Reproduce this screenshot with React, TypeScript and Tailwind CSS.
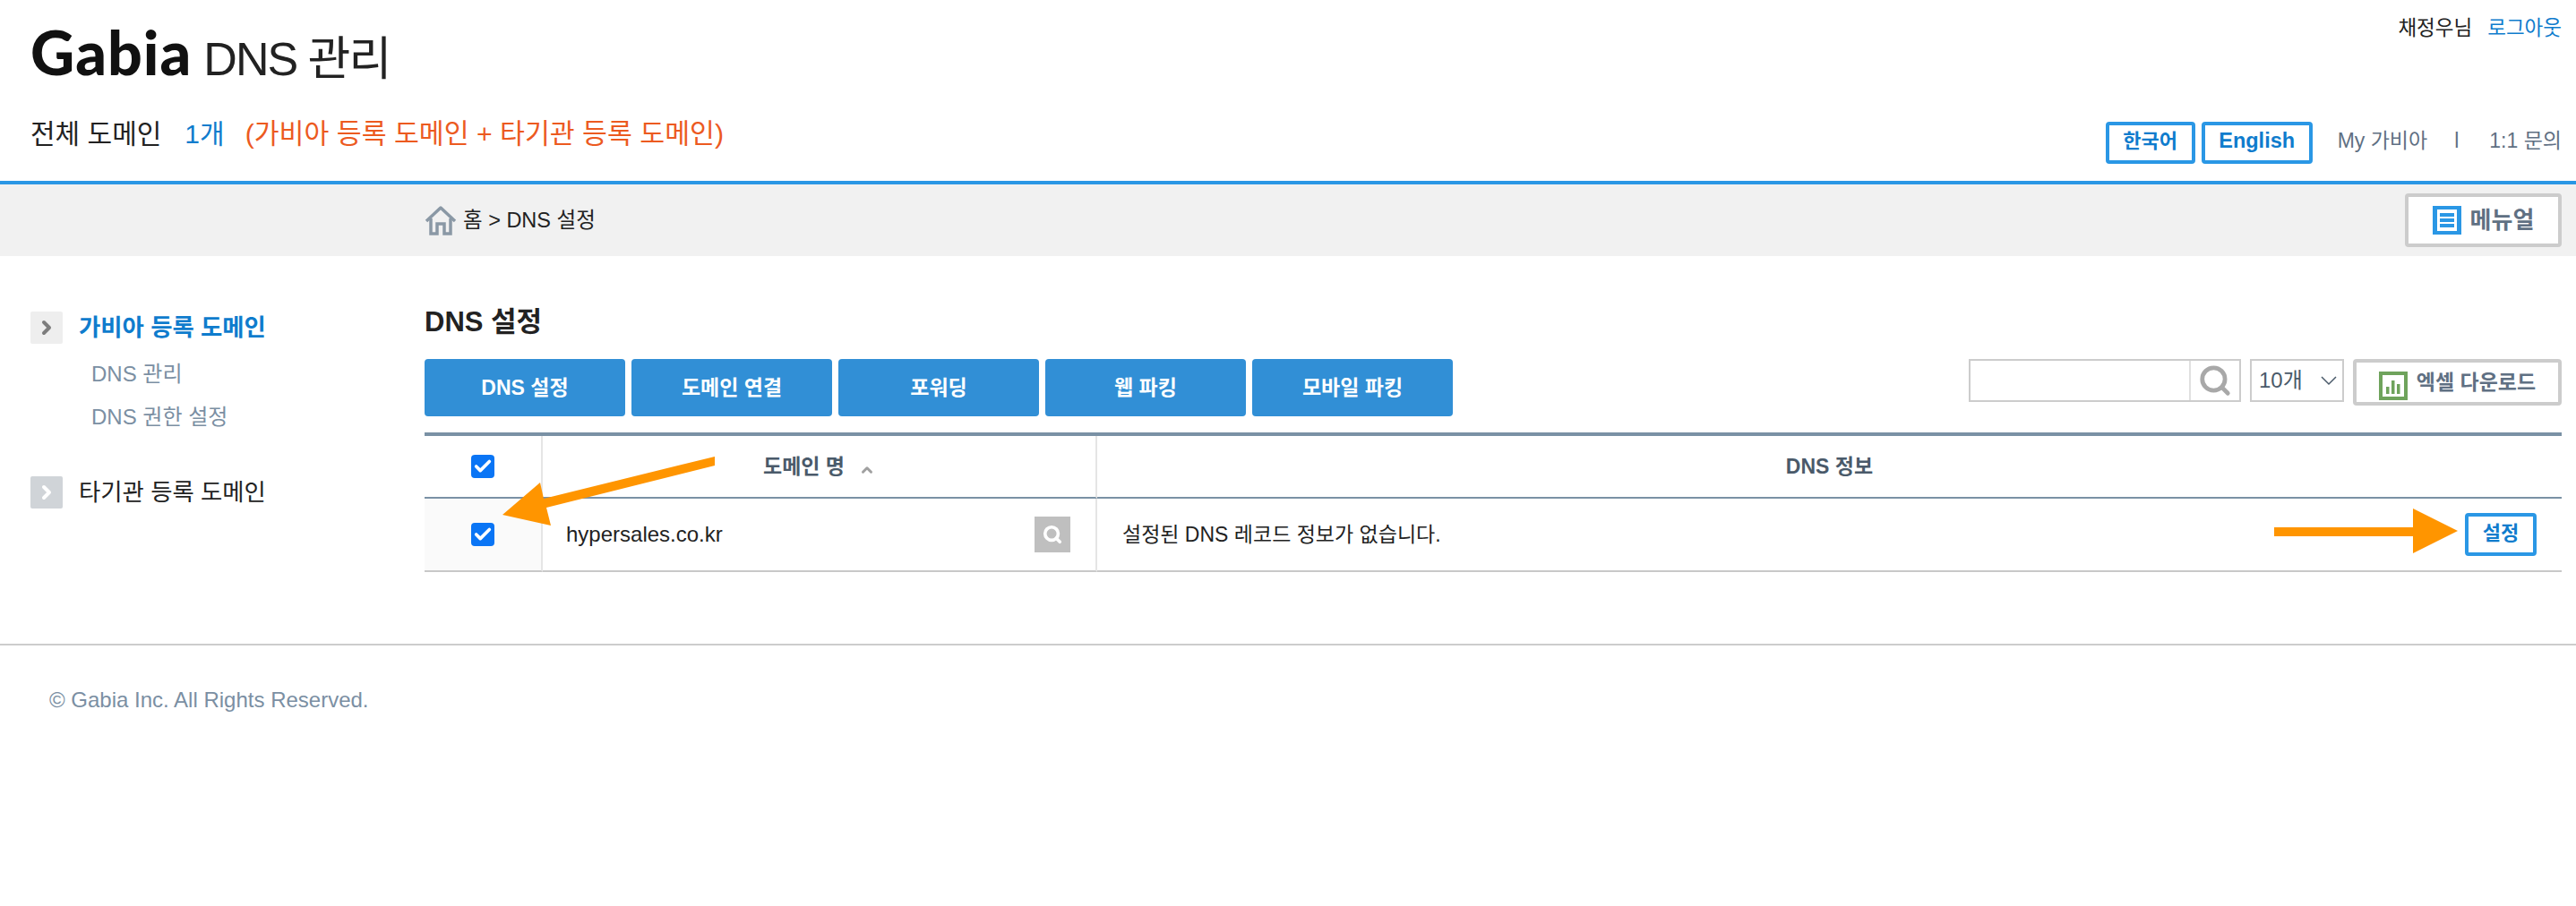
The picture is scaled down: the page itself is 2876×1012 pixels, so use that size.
import { Check, ChevronRight, ChevronUp, Search } from 'lucide-react'

const SANS = 'font-["Liberation_Sans","Noto_Sans_CJK_KR",sans-serif]'

const tabs = ['DNS 설정', '도메인 연결', '포워딩', '웹 파킹', '모바일 파킹']

const HomeIcon = () => (
  <svg width="36" height="34" viewBox="0 0 36 34" fill="none" stroke="#8a98a5" strokeWidth="3.5">
    <path d="M2 18 18 3l16 15" strokeLinejoin="round" />
    <path d="M7 15v17h7V21h8v11h7V15" />
  </svg>
)

const MenuIcon = () => (
  <svg width="32" height="32" viewBox="0 0 32 32">
    <rect width="32" height="32" fill="#2a97e5" />
    <rect x="5" y="4" width="22" height="24" fill="#fff" />
    <rect x="8" y="8" width="16" height="4" fill="#2a97e5" />
    <rect x="8" y="14" width="16" height="4" fill="#2a97e5" />
    <rect x="8" y="20" width="16" height="4" fill="#2a97e5" />
  </svg>
)

const ExcelIcon = () => (
  <svg width="32" height="32" viewBox="0 0 32 32">
    <rect width="32" height="32" fill="#6fa35c" />
    <rect x="4" y="4" width="24" height="24" fill="#fff" />
    <rect x="8" y="17" width="3.5" height="8" fill="#6fa35c" />
    <rect x="14" y="10" width="3.5" height="15" fill="#6fa35c" />
    <rect x="20" y="14" width="3.5" height="11" fill="#6fa35c" />
  </svg>
)

const CheckBox = () => (
  <span className="mx-auto flex h-[26px] w-[26px] items-center justify-center rounded-[4px] bg-[#0a75f5]">
    <Check size={22} color="#fff" strokeWidth={4} />
  </span>
)

const SideHead = ({ label, active }: { label: string; active?: boolean }) => (
  <div className="flex h-9 items-center gap-[18px]">
    <span
      className={`flex h-9 w-9 items-center justify-center rounded-[2px] ${active ? 'bg-[#eeeeee]' : 'bg-[#d0d4d8]'}`}
    >
      <ChevronRight size={24} strokeWidth={4} color={active ? '#7d7d7d' : '#ffffff'} />
    </span>
    <span className={`text-[26.4px] leading-9 ${active ? 'font-bold text-[#0f7ccd]' : 'text-[#222222]'}`}>{label}</span>
  </div>
)

export default function App() {
  return (
    <div className={`relative h-[1012px] w-[2876px] overflow-hidden bg-white ${SANS}`}>
      <header className="flex h-[206px] justify-between border-b-4 border-[#2a97e5] pl-[34px] pr-4">
        <div>
          <h1 className="mt-[24px] flex h-[68px] items-baseline leading-[68px]">
            <span className='font-["Lato"] text-[68px] font-black tracking-[1px] text-[#111111]'>Gabia</span>
            <span className="ml-[13px] text-[52px] tracking-[-2px] text-[#222222]">DNS 관리</span>
          </h1>
          <p className="mt-[38px] flex text-[30px] leading-10">
            <span className="text-[#222222]">전체 도메인</span>
            <span className="ml-[26px] text-[#0f7ccd]">1개</span>
            <span className="ml-[23px] text-[30.3px] text-[#ec5a1f]">(가비아 등록 도메인 + 타기관 등록 도메인)</span>
          </p>
        </div>
        <div className="flex flex-col items-end">
          <div className="mt-[16px] flex text-[22.5px] leading-8">
            <span className="text-[#222222]">채정우님</span>
            <a className="ml-[17px] text-[#0f7ccd]">로그아웃</a>
          </div>
          <div className="mt-[88px] flex items-center text-[23px] text-[#5f7083]">
            <button className="h-[47px] w-[100px] rounded-[4px] border-4 border-[#2a97e5] pb-1 text-[22px] font-bold text-[#0f7ccd]">
              한국어
            </button>
            <button className="ml-[7px] h-[47px] w-[124px] rounded-[4px] border-4 border-[#2a97e5] pb-1 text-[23.5px] font-bold text-[#0f7ccd]">
              English
            </button>
            <span className="ml-7 pb-1">My 가비아</span>
            <span className="ml-[30px] pb-1">l</span>
            <span className="ml-[34px] pb-1">1:1 문의</span>
          </div>
        </div>
      </header>

      <div className="flex h-20 items-center justify-between bg-[#f1f1f1] pl-[474px] pr-4">
        <div className="flex items-center gap-[7px] text-[23.5px] text-[#222222]">
          <HomeIcon />
          <span className="pt-[2px]">홈 &gt; DNS 설정</span>
        </div>
        <button className="flex h-[60px] w-[175px] items-center justify-center gap-[10px] rounded-[4px] border-4 border-[#cccccc] bg-white text-[26px] font-bold text-[#5f7083]">
          <MenuIcon />
          메뉴얼
        </button>
      </div>

      <div className="flex h-[435px] border-b-2 border-[#cccccc] pr-4">
        <aside className="w-[474px] pl-[34px] pt-[62px]">
          <SideHead label="가비아 등록 도메인" active />
          <ul className="ml-[68px] mt-[19px] flex flex-col gap-[18px] text-2xl leading-[30px] text-[#7b8fa3]">
            <li>DNS 관리</li>
            <li>DNS 권한 설정</li>
          </ul>
          <div className="mt-[51px]">
            <SideHead label="타기관 등록 도메인" />
          </div>
        </aside>

        <main className="flex-1 pt-[56px]">
          <h2 className="h-[59px] text-[31px] font-bold leading-9 text-[#222222]">DNS 설정</h2>
          <div className="flex justify-between">
            <div className="flex gap-[7px]">
              {tabs.map((t) => (
                <button key={t} className="h-16 w-[224px] rounded-[4px] bg-[#318fd6] text-[23px] font-bold text-white">
                  {t}
                </button>
              ))}
            </div>
            <div className="flex items-start gap-[10px]">
              <div className="flex h-12 w-[304px] border-2 border-[#cccccc]">
                <span className="flex-1 border-r-2 border-[#e0e0e0]" />
                <span className="flex w-[54px] items-center justify-center">
                  <Search size={38} color="#a8a8a8" strokeWidth={3} />
                </span>
              </div>
              <div className="flex h-12 w-[105px] items-center justify-between border-2 border-[#cccccc] pl-2 pr-[6px] text-2xl text-[#4a5a6a]">
                10개
                <svg width="18" height="12" viewBox="0 0 18 12" fill="none" stroke="#4a5a6a" strokeWidth="1.5">
                  <path d="M1 2l8 8 8-8" />
                </svg>
              </div>
              <button className="flex h-[52px] w-[233px] justify-center gap-[10px] rounded-[4px] border-4 border-[#cccccc] pt-[10px] text-[23px] font-bold leading-[24px] text-[#5f7083]">
                <ExcelIcon />
                엑셀 다운로드
              </button>
            </div>
          </div>

          <table className="mt-[18px] w-full table-fixed border-separate border-spacing-0 border-t-4 border-[#7a91a5]">
            <colgroup>
              <col className="w-[132px]" />
              <col className="w-[619px]" />
              <col />
            </colgroup>
            <thead>
              <tr className="h-[70px] text-[23px] font-bold text-[#4a5a6a]">
                <th className="border-b-2 border-r-2 border-b-[#7a91a5] border-r-[#e5e5e5]">
                  <CheckBox />
                </th>
                <th className="border-b-2 border-r-2 border-b-[#7a91a5] border-r-[#e5e5e5]">
                  <span className="inline-flex items-center gap-4">
                    도메인 명
                    <ChevronUp size={18} color="#a0a0a0" strokeWidth={4} className="mt-2" />
                  </span>
                </th>
                <th className="border-b-2 border-b-[#7a91a5]">DNS 정보</th>
              </tr>
            </thead>
            <tbody>
              <tr className="h-[82px] text-[#222222]">
                <td className="border-b-2 border-r-2 border-b-[#c8c8c8] border-r-[#e5e5e5] bg-[#fafafa]">
                  <CheckBox />
                </td>
                <td className="border-b-2 border-r-2 border-b-[#c8c8c8] border-r-[#e5e5e5] pl-[26px] pr-7 text-2xl">
                  <div className="flex items-center justify-between">
                    hypersales.co.kr
                    <span className="flex h-10 w-10 items-center justify-center bg-[#bfbfbf]">
                      <Search size={22} color="#fff" strokeWidth={4} />
                    </span>
                  </div>
                </td>
                <td className="border-b-2 border-b-[#c8c8c8] pl-[28px] pr-7 text-[23px]">
                  <div className="flex items-center justify-between">
                    설정된 DNS 레코드 정보가 없습니다.
                    <button className="h-12 w-20 rounded-[4px] border-4 border-[#2a97e5] pb-1 text-[22px] font-bold text-[#0f7ccd]">
                      설정
                    </button>
                  </div>
                </td>
              </tr>
            </tbody>
          </table>
        </main>
      </div>

      <footer className="pl-[55px] pt-[45px] text-2xl leading-8 text-[#7b8fa3]">© Gabia Inc. All Rights Reserved.</footer>

      {/* annotation arrows drawn on top of the screenshot */}
      <svg className="pointer-events-none absolute left-0 top-0" width="2876" height="1012" fill="#ff9500">
        <polygon points="798,510 798,520 610,567 615,587 561,575 603,539 607,557" />
        <polygon points="2539,589 2694,589 2694,568 2744,593 2694,618 2694,599 2539,599" />
      </svg>
    </div>
  )
}
